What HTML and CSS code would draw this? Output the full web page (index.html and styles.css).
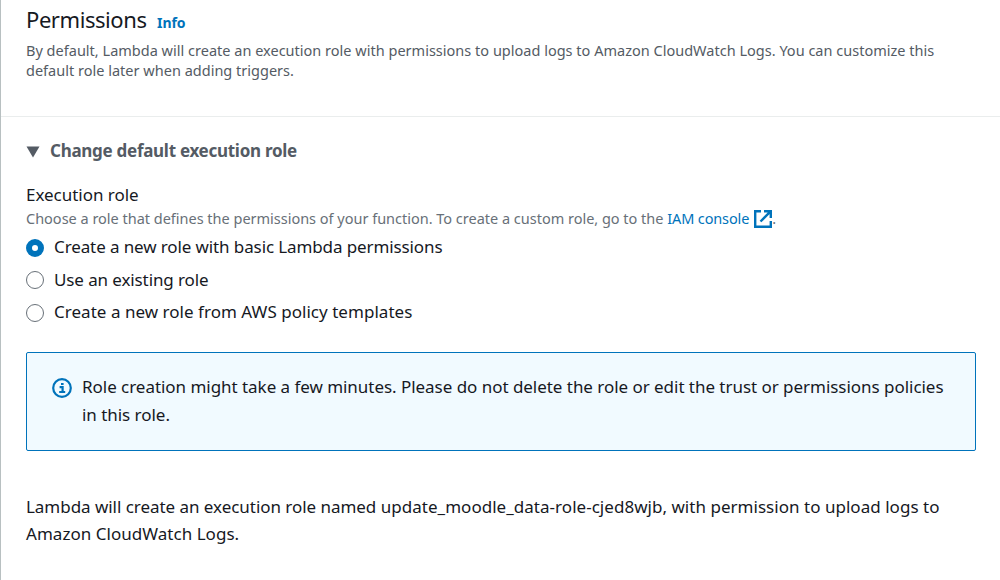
FILE: index.html
```html
<!DOCTYPE html>
<html lang="en">
<head>
<meta charset="utf-8">
<title>Permissions</title>
<link rel="stylesheet" href="styles.css">
</head>
<body>
<main class="panel">
  <header class="panel-header">
    <div class="title-row"><h2 class="title">Permissions</h2><a class="info">Info</a></div>
    <p class="description">By default, Lambda will create an execution role with permissions to upload logs to Amazon CloudWatch Logs. You can customize this<br>default role later when adding triggers.</p>
  </header>
  <section class="content">
    <h3 class="expander"><svg class="caret" viewBox="0 0 14 12"><path d="M.5 .5h13L7 11.5z"/></svg><span>Change default execution role</span></h3>
    <div class="label">Execution role</div>
    <div class="hint">Choose a role that defines the permissions of your function. To create a custom role, go to the <a class="link">IAM console<svg class="external" viewBox="0 0 18 18"><path d="M7 1.2H1.2v15.6h15.6V11M10 1.2h6.8V8M16.8 1.2L6.5 11.5"/></svg></a>.</div>
    <div class="options">
      <label class="option"><i class="radio checked"></i><span class="tight">Create a new role with basic Lambda permissions</span></label>
      <label class="option"><i class="radio"></i><span class="tight">Use an existing role</span></label>
      <label class="option"><i class="radio"></i><span class="loose">Create a new role from AWS policy templates</span></label>
    </div>
    <div class="alert">
      <svg class="info-icon" viewBox="0 0 20 20"><circle cx="10" cy="10" r="8.8"/><path d="M9 6h2.6M7.6 9.2h3v4.8M7.2 14h6"/></svg>
      <p class="alert-text">Role creation might take a few minutes. Please do not delete the role or edit the trust or permissions policies<br>in this role.</p>
    </div>
    <p class="summary"><span class="summary-lead">Lambda will create an execution role named</span> update_moodle_data-role-cjed8wjb, with permission to upload logs to<br>Amazon CloudWatch Logs.</p>
  </section>
</main>
</body>
</html>
```
FILE: styles.css
```css
* { box-sizing: border-box; }
body { margin: 0; background: #fff; color: #16191f; font: 17px/27px "Noto Sans", sans-serif; }
h2, h3, p { margin: 0; font-weight: 400; }
.panel { height: 580px; border-left: 1px solid #b8c0c1; overflow: hidden; white-space: nowrap; }
.panel-header { height: 117px; padding: 5px 25px 0; border-bottom: 1px solid #eaeded; }
.title-row { display: flex; align-items: baseline; gap: 10.5px; height: 35px; }
.title { font-size: 22px; line-height: 28px; letter-spacing: -0.43px; }
.info { color: #0073bb; font-size: 14px; font-weight: 700; letter-spacing: -0.1px; }
.description { color: #545b64; font-size: 14.5px; line-height: 20px; letter-spacing: 0.01px; }
.content { padding: 20px 24px 0 25px; }
.expander { display: flex; align-items: center; gap: 10px; color: #545b64; font-size: 17px; font-weight: 700; line-height: 28px; letter-spacing: -0.28px; }
.caret { width: 14px; height: 12px; margin-top: 2px; fill: #545b64; }
.label { margin-top: 17px; line-height: 26px; letter-spacing: -0.03px; }
.hint { height: 22px; margin-top: -1px; color: #687078; font-size: 14.5px; line-height: 22px; letter-spacing: -0.01px; }
.link { color: #0073bb; letter-spacing: -0.13px; }
.external { width: 18px; height: 18px; margin-left: 5px; vertical-align: -4px; fill: none; stroke: #0073bb; stroke-width: 2.4; }
.options { display: grid; gap: 5.5px; margin-top: 4px; }
.option { display: flex; align-items: center; gap: 10px; }
.radio { width: 18px; height: 18px; margin-top: 2px; border: 1px solid #687078; border-radius: 50%; }
.radio.checked { border: 6px solid #0073bb; }
.tight { letter-spacing: -0.11px; }
.loose { letter-spacing: 0.03px; }
.alert { display: flex; gap: 10px; height: 99px; margin-top: 27px; padding: 20px 25px; border: 1px solid #0073bb; border-radius: 2px; background: #f1faff; }
.info-icon { width: 20px; height: 20px; margin-top: 5px; fill: none; stroke: #0073bb; stroke-width: 2.2; }
.alert-text { line-height: 28px; letter-spacing: -0.038px; }
.summary { margin-top: 42px; letter-spacing: 0.03px; }
.summary-lead { letter-spacing: -0.04px; }
```
